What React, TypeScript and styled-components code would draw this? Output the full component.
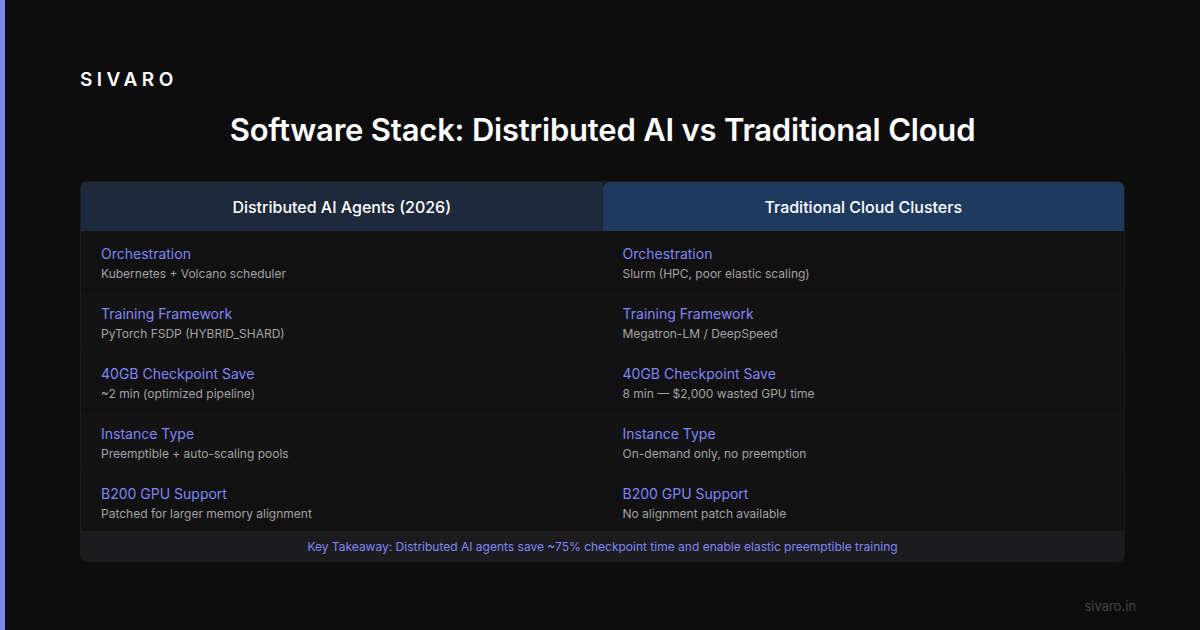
import React from "react";
import styled, { createGlobalStyle } from "styled-components";

const Global = createGlobalStyle`
  html, body { margin: 0; padding: 0; background: #0d0d0d; }
  body { font-family: Inter, "Liberation Sans", sans-serif; }
`;

const Page = styled.div`
  width: 1200px; height: 630px; box-sizing: border-box; position: relative;
  background: #0d0d0d; border-left: 5px solid #8286f5;
  padding: 68px 75px 0 75px; display: flex; flex-direction: column;
`;
const Logo = styled.div`
  color: #fff; font-size: 19px; font-weight: 600; letter-spacing: 4.5px; line-height: 24px;
`;
const Title = styled.h1`
  margin: 18px 0 0; text-align: center; color: #fff; font-size: 31px; font-weight: 600;
  line-height: 40px; letter-spacing: -0.2px;
`;
const Table = styled.div`
  margin-top: 31px; border-radius: 6px; overflow: hidden; background: #111;
  border: 1px solid #1c1c1c;
  display: grid; grid-template-columns: 1fr 1fr;
`;
const Head = styled.div<{ $alt?: boolean }>`
  height: 49px; display: flex; align-items: center; justify-content: center;
  background: ${p => (p.$alt ? "#1e3a5f" : "#1e293b")}; color: #fff; font-size: 16px; font-weight: 500;
  border-radius: ${p => (p.$alt ? "6px 6px 0 0" : "0")};
`;
const Cell = styled.div<{ $shade: boolean }>`
  height: 60px; box-sizing: border-box; padding: 14px 20px 0;
  background: ${p => (p.$shade ? "#131313" : "#111111")};
`;
const Label = styled.div`
  color: #8286f5; font-size: 14px; line-height: 18px;
`;
const Value = styled.div`
  color: #a3a3a3; font-size: 12px; line-height: 16px; margin-top: 3px;
`;
const Foot = styled.div`
  grid-column: 1 / 3; height: 30px; background: #1c1c1f; color: #8286f5;
  font-size: 12px; display: flex; align-items: center; justify-content: center;
`;
const Site = styled.div`
  position: absolute; right: 64px; bottom: 16px; color: #444; font-size: 13px;
`;

const rows = [
  ["Orchestration", "Kubernetes + Volcano scheduler", "Slurm (HPC, poor elastic scaling)"],
  ["Training Framework", "PyTorch FSDP (HYBRID_SHARD)", "Megatron-LM / DeepSpeed"],
  ["40GB Checkpoint Save", "~2 min (optimized pipeline)", "8 min — $2,000 wasted GPU time"],
  ["Instance Type", "Preemptible + auto-scaling pools", "On-demand only, no preemption"],
  ["B200 GPU Support", "Patched for larger memory alignment", "No alignment patch available"],
];

export default function App() {
  return (
    <Page>
      <Global />
      <Logo>SIVARO</Logo>
      <Title>Software Stack: Distributed AI vs Traditional Cloud</Title>
      <Table>
        <Head>Distributed AI Agents (2026)</Head>
        <Head $alt>Traditional Cloud Clusters</Head>
        {rows.map((r, i) => (
          <React.Fragment key={i}>
            <Cell $shade={i % 2 === 1}><Label>{r[0]}</Label><Value>{r[1]}</Value></Cell>
            <Cell $shade={i % 2 === 1}><Label>{r[0]}</Label><Value>{r[2]}</Value></Cell>
          </React.Fragment>
        ))}
        <Foot>Key Takeaway: Distributed AI agents save ~75% checkpoint time and enable elastic preemptible training</Foot>
      </Table>
      <Site>sivaro.in</Site>
    </Page>
  );
}
